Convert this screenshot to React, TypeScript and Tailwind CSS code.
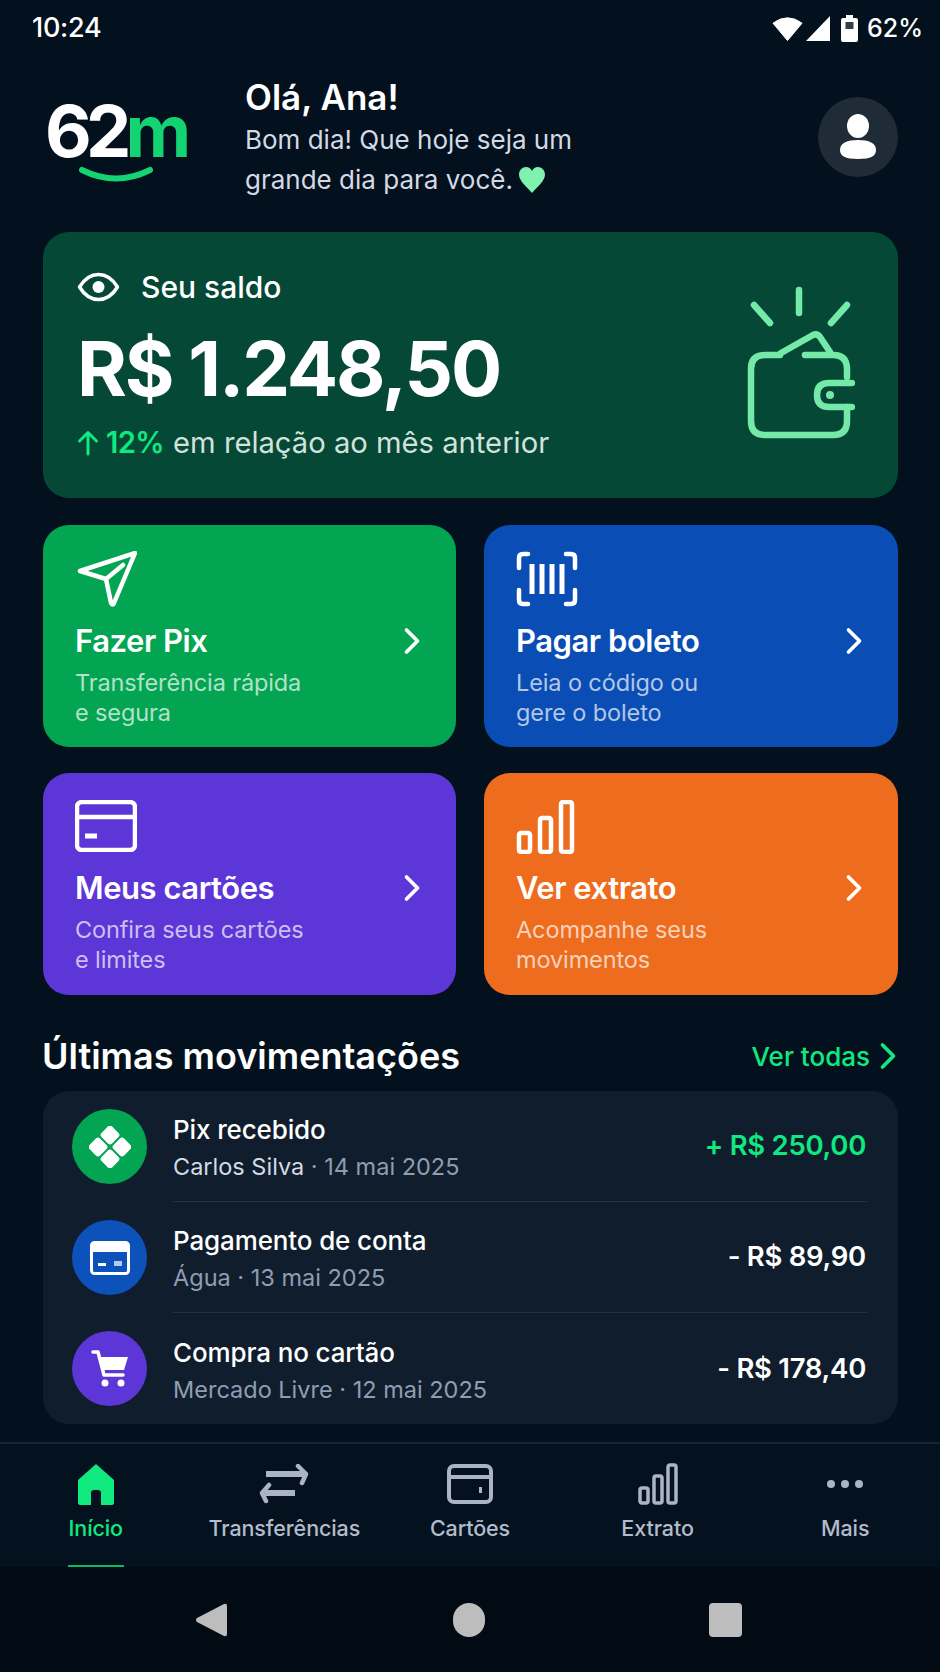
import { ChevronRight } from "lucide-react";
import type { ReactNode } from "react";

const font = { fontFamily: "Inter, sans-serif" };

function StatusBar() {
  return (
    <div className="flex h-[56px] items-center justify-between pl-[32px] pr-[17px] pt-[1px] text-[27px] font-medium tracking-[-0.01em] text-white">
      <span>10:24</span>
      <div className="flex items-center">
        <svg width="31" height="27" viewBox="0 0 32 27" fill="white">
          <path d="M1 8 Q16 -3 31 8 L16 26 Z" strokeLinejoin="round" stroke="white" strokeWidth="1" />
        </svg>
        <svg width="26" height="25" viewBox="0 0 26 25" fill="white" className="ml-[2px]">
          <path d="M25 0 V25 H1 Z" />
        </svg>
        <svg width="17" height="27" viewBox="0 0 17 27" className="ml-[10px]">
          <path d="M5 0 H12 V3 H15 Q17 3 17 5 V25 Q17 27 15 27 H2 Q0 27 0 25 V5 Q0 3 2 3 H5 Z" fill="white" />
          <rect x="4.5" y="7" width="8" height="7" fill="#33404d" />
        </svg>
        <span className="ml-[9px] text-[25px] tracking-normal">62%</span>
      </div>
    </div>
  );
}

function Logo() {
  return (
    <div className="relative mt-[28px] h-[110px] w-[155px] shrink-0">
      <div className="flex items-baseline pl-[2px] pt-[2px] text-[72px] leading-[90px] font-bold tracking-[-0.08em]">
        <span className="text-white">62</span>
        <span className="text-[#14d373]">m</span>
      </div>
      <svg className="absolute left-[35px] top-[81px]" width="76" height="26" viewBox="0 0 76 26" fill="none">
        <path d="M4 5 Q38 22 72 5" stroke="#14d373" strokeWidth="6" strokeLinecap="round" />
      </svg>
    </div>
  );
}

function Header() {
  return (
    <div className="flex h-[176px] items-start justify-between">
      <Logo />
      <div className="ml-[47px] flex-1 pt-[18px]">
        <div className="text-[35px] leading-[46px] font-semibold text-white">Olá, Ana!</div>
        <div className="text-[26px] leading-[40px] text-[#d3dae6]">
          Bom dia! Que hoje seja um
          <br />
          grande dia para você.{" "}
          <svg className="-ml-[2px] inline-block align-[-4px]" width="28" height="26" viewBox="0 0 28 26" fill="#7ef2ae">
            <path d="M14 26 C9 20 1 14 1 7.5 C1 3 4.5 0 8 0 C10.5 0 13 1.5 14 4 C15 1.5 17.5 0 20 0 C23.5 0 27 3 27 7.5 C27 14 19 20 14 26 Z" />
          </svg>
        </div>
      </div>
      <div className="mt-[41px] flex h-[80px] w-[80px] items-center justify-center rounded-full bg-[#202b38]">
        <svg width="40" height="46" viewBox="0 0 40 46" fill="white">
          <ellipse cx="20" cy="12" rx="11" ry="12" />
          <path d="M2 36 C2 29 9 26 20 26 C31 26 38 29 38 36 C38 42 33 45 20 45 C7 45 2 42 2 36 Z" />
        </svg>
      </div>
    </div>
  );
}

function BalanceCard() {
  return (
    <div className="flex h-[266px] items-start justify-between rounded-[26px] bg-[#054836] pl-[34px] pr-[43px] pt-[36px]">
      <div>
        <div className="flex items-center gap-[21px]">
          <svg width="43" height="30" viewBox="0 0 43 30" fill="none">
            <path d="M2.5 15 C8 6 14 2.5 21.5 2.5 C29 2.5 35 6 40.5 15 C35 24 29 27.5 21.5 27.5 C14 27.5 8 24 2.5 15 Z" stroke="white" strokeWidth="3.5" strokeLinejoin="round" />
            <circle cx="21.5" cy="15" r="6" fill="white" />
          </svg>
          <span className="text-[30px] leading-[38px] font-medium text-white">Seu saldo</span>
        </div>
        <div className="mt-[18px] text-[76px] leading-[88px] font-bold tracking-[-0.028em] text-white">R$ 1.248,50</div>
        <div className="mt-[13px] flex items-center text-[29.2px] leading-[36px] text-[#d3e2dc]">
          <svg width="22" height="26" viewBox="0 0 22 26" fill="none" className="mr-[7px]">
            <path d="M11 24 V3 M2.5 11 L11 2.5 L19.5 11" stroke="#10e880" strokeWidth="3" strokeLinecap="round" strokeLinejoin="round" />
          </svg>
          <span className="mr-[9px] font-semibold tracking-[-0.02em] text-[#10e880]">12%</span>
          <span>em relação ao mês anterior</span>
        </div>
      </div>
      <svg className="mt-[17px]" width="110" height="155" viewBox="0 0 110 155" fill="none" stroke="#75eaa8" strokeWidth="6.5" strokeLinecap="round" strokeLinejoin="round">
        <path d="M54 5 V28 M9 20 L25 38 M102 20 L86 38" />
        <path d="M35 70 H20 Q6 70 6 84 V136 Q6 150 20 150 H88 Q102 150 102 136 V122 M102 92 V84 Q102 70 88 70 H60" />
        <path d="M36 68 L68 50 Q72 48 75 52 L85 67" />
        <path d="M107 98 H84 Q72 98 72 110 Q72 122 84 122 H107" />
        <circle cx="85" cy="110" r="4" fill="#75eaa8" stroke="none" />
      </svg>
    </div>
  );
}

type ActionProps = {
  bg: string;
  icon: ReactNode;
  title: string;
  line1: string;
  line2: string;
  compact?: boolean;
};

function ActionCard({ bg, icon, title, line1, line2, compact }: ActionProps) {
  return (
    <div className={`h-[222px] rounded-[26px] pl-[32px] pr-[22px] pt-[26px] ${bg}`}>
      <div className="h-[56px]">{icon}</div>
      <div className={`flex h-[40px] items-center justify-between ${compact ? "mt-[12px]" : "mt-[14px]"}`}>
        <span className="text-[31px] leading-[40px] font-semibold tracking-[-0.015em] text-white">{title}</span>
        <ChevronRight size={44} strokeWidth={2} className="text-white" />
      </div>
      <div className="mt-[7px] text-[23.5px] leading-[30px] tracking-[-0.005em] text-white/70">
        {line1}
        <br />
        {line2}
      </div>
    </div>
  );
}

function ActionGrid() {
  return (
    <div className="mt-[27px] grid grid-cols-[413px_1fr] gap-x-[28px] gap-y-[26px]">
      <ActionCard
        bg="bg-[#03a553]"
        title="Fazer Pix"
        line1="Transferência rápida"
        line2="e segura"
        icon={
          <svg className="ml-[2px]" width="60" height="56" viewBox="0 0 60 56" fill="none" stroke="white" strokeWidth="4.5" strokeLinejoin="round" strokeLinecap="round">
            <path d="M3 20 L58 2 L37 52 Q36 55 34 52 L29 28 Z M29 28 L46 14" />
          </svg>
        }
      />
      <ActionCard
        bg="bg-[#0a4db5]"
        title="Pagar boleto"
        line1="Leia o código ou"
        line2="gere o boleto"
        icon={
          <svg width="62" height="56" viewBox="0 0 62 56" fill="none" stroke="white" strokeWidth="4.5" strokeLinecap="round" strokeLinejoin="round">
            <path d="M12 3 H7 Q3 3 3 7 V17 M50 3 H55 Q59 3 59 7 V17 M3 39 V49 Q3 53 7 53 H12 M59 39 V49 Q59 53 55 53 H50" />
            <path d="M16 13 V43 M26 13 V43 M36 13 V43 M46 13 V43" strokeLinecap="butt" strokeWidth="5" />
          </svg>
        }
      />
      <ActionCard
        compact
        bg="bg-[#5c36d6]"
        title="Meus cartões"
        line1="Confira seus cartões"
        line2="e limites"
        icon={
          <svg className="mt-[1px]" width="62" height="52" viewBox="0 0 62 52" fill="none" stroke="white" strokeWidth="4.5">
            <rect x="2" y="2" width="58" height="48" rx="5" />
            <path d="M2 17 H60" />
            <path d="M10 36 H22" strokeWidth="5" />
          </svg>
        }
      />
      <ActionCard
        compact
        bg="bg-[#ee6c1e]"
        title="Ver extrato"
        line1="Acompanhe seus"
        line2="movimentos"
        icon={
          <svg className="mt-[1px]" width="60" height="54" viewBox="0 0 60 54" fill="none" stroke="white" strokeWidth="4.5">
            <rect x="3" y="33" width="11" height="19" rx="2" />
            <rect x="24" y="18" width="11" height="34" rx="2" />
            <rect x="45" y="2" width="11" height="50" rx="2" />
          </svg>
        }
      />
    </div>
  );
}

type RowProps = {
  circle: string;
  icon: ReactNode;
  title: string;
  who: string;
  whoClass: string;
  date: string;
  amount: string;
  amountClass: string;
  last?: boolean;
};

function TxRow({ circle, icon, title, who, whoClass, date, amount, amountClass, last }: RowProps) {
  return (
    <div className="flex h-[111px] items-center">
      <div className={`flex h-[75px] w-[75px] shrink-0 items-center justify-center rounded-full ${circle}`}>{icon}</div>
      <div className={`ml-[26px] flex h-full flex-1 items-center justify-between ${last ? "" : "border-b border-[#263241]"}`}>
        <div className="pt-[4px]">
          <div className="text-[26px] leading-[37px] font-medium tracking-[-0.005em] text-white">{title}</div>
          <div className="text-[23.5px] leading-[37px] text-[#8f9db3]">
            <span className={whoClass}>{who}</span> · {date}
          </div>
        </div>
        <span className={`pr-[1px] text-[27.5px] font-semibold tracking-[-0.01em] ${amountClass}`}>{amount}</span>
      </div>
    </div>
  );
}

function Movements() {
  return (
    <>
      <div className="mt-[37px] flex items-center justify-between">
        <h2 className="-ml-[1px] text-[36px] leading-[48px] font-semibold text-white">Últimas movimentações</h2>
        <div className="flex items-center text-[26px] font-medium text-[#10e880]">
          Ver todas
          <ChevronRight size={44} strokeWidth={2} className="-my-[6px] -ml-[4px] -mr-[12px]" />
        </div>
      </div>
      <div className="mt-[11px] h-[333px] rounded-[26px] bg-[#101d2c] pl-[29px] pr-[31px]">
        <TxRow
          circle="bg-[#03a553]"
          title="Pix recebido"
          who="Carlos Silva"
          whoClass="text-[#d3dae6]"
          date="14 mai 2025"
          amount="+ R$ 250,00"
          amountClass="text-[#10e880]"
          icon={
            <svg width="42" height="42" viewBox="0 0 42 42" fill="white">
              <rect x="13.5" y="1.5" width="15" height="15" rx="3" transform="rotate(45 21 9)" />
              <rect x="13.5" y="25.5" width="15" height="15" rx="3" transform="rotate(45 21 33)" />
              <rect x="1.5" y="13.5" width="15" height="15" rx="3" transform="rotate(45 9 21)" />
              <rect x="25.5" y="13.5" width="15" height="15" rx="3" transform="rotate(45 33 21)" />
            </svg>
          }
        />
        <TxRow
          circle="bg-[#0d51bb]"
          title="Pagamento de conta"
          who="Água"
          whoClass=""
          date="13 mai 2025"
          amount="- R$ 89,90"
          amountClass="text-white"
          icon={
            <svg width="40" height="34" viewBox="0 0 40 34" fill="none">
              <rect x="1.5" y="1.5" width="37" height="31" rx="3" stroke="white" strokeWidth="3" />
              <rect x="2" y="2" width="36" height="9" fill="white" />
              <rect x="8" y="22" width="8" height="3" fill="white" />
              <rect x="24" y="20" width="8" height="5" fill="white" opacity="0.7" />
            </svg>
          }
        />
        <TxRow
          last
          circle="bg-[#5c36d6]"
          title="Compra no cartão"
          who="Mercado Livre"
          whoClass=""
          date="12 mai 2025"
          amount="- R$ 178,40"
          amountClass="text-white"
          icon={
            <svg width="40" height="40" viewBox="0 0 40 40" fill="white">
              <path d="M3 3 H8 L14 26 H33" fill="none" stroke="white" strokeWidth="3.5" strokeLinecap="round" strokeLinejoin="round" />
              <path d="M9 8 H38 L34 21 H12 Z" />
              <circle cx="15" cy="34" r="3.5" />
              <circle cx="31" cy="34" r="3.5" />
            </svg>
          }
        />
      </div>
    </>
  );
}

type NavProps = { icon: ReactNode; label: string; active?: boolean; nudge?: string };

function NavItem({ icon, label, active, nudge = "" }: NavProps) {
  return (
    <div className={`relative flex flex-1 flex-col items-center pt-[18px] ${nudge}`}>
      <div className="flex h-[44px] items-center justify-center">{icon}</div>
      <span className={`mt-[8px] text-[21.5px] leading-[28px] font-medium tracking-[-0.005em] ${active ? "text-[#10e880]" : "text-[#b3bccb]"}`}>{label}</span>
      {active && <div className="absolute bottom-0 h-[2px] w-[56px] bg-[#10b765]" />}
    </div>
  );
}

function BottomNav() {
  const gray = "#aab4c4";
  return (
    <div className="mt-[18px] flex h-[125px] border-t-2 border-[#182431] bg-[#04121f] px-[1px]">
      <NavItem
        active
        nudge="translate-x-[1px]"
        label="Início"
        icon={
          <svg width="38" height="43" viewBox="0 0 38 43" fill="#10e880">
            <path d="M19 1 L37 17 V40 Q37 42 35 42 H24 V30 Q24 27 21 27 H17 Q14 27 14 30 V42 H3 Q1 42 1 40 V17 Z" strokeLinejoin="round" />
          </svg>
        }
      />
      <NavItem
        nudge="translate-x-[2px]"
        label="Transferências"
        icon={
          <svg width="50" height="40" viewBox="0 0 50 40" fill="none" stroke={gray} strokeWidth="4.5" strokeLinecap="round" strokeLinejoin="round">
            <path d="M7 10 H46" strokeWidth="6" strokeLinecap="butt" />
            <path d="M39 2 L47 10 L43 19" />
            <path d="M36 29 H6" strokeWidth="6" strokeLinecap="butt" />
            <path d="M10 21 L3 29 L7 37" />
          </svg>
        }
      />
      <NavItem
        label="Cartões"
        icon={
          <svg width="46" height="40" viewBox="0 0 46 40" fill="none" stroke={gray} strokeWidth="4">
            <rect x="2" y="2" width="42" height="36" rx="5" />
            <path d="M2 13 H44" />
            <rect x="32" y="23" width="3" height="6" fill={gray} stroke="none" />
          </svg>
        }
      />
      <NavItem
        label="Extrato"
        icon={
          <svg width="40" height="42" viewBox="0 0 40 42" fill="none" stroke={gray} strokeWidth="3.5">
            <rect x="2" y="25" width="8" height="15" rx="2" />
            <rect x="16" y="13" width="8" height="27" rx="2" />
            <rect x="30" y="2" width="8" height="38" rx="2" />
          </svg>
        }
      />
      <NavItem
        label="Mais"
        icon={
          <svg width="38" height="10" viewBox="0 0 38 10" fill={gray}>
            <circle cx="5" cy="5" r="4" />
            <circle cx="19" cy="5" r="4" />
            <circle cx="33" cy="5" r="4" />
          </svg>
        }
      />
    </div>
  );
}

function SystemBar() {
  return (
    <div className="flex h-[105px] items-start justify-center gap-[224px] bg-[#020a14] pr-[4px] pt-[36px]">
      <svg className="mr-[2px]" width="32" height="34" viewBox="0 0 32 34" fill="#bdbdbd">
        <path d="M29 1 Q32 0 32 3 V31 Q32 34 29 33 L2 19 Q0 17 2 15 Z" />
      </svg>
      <div className="h-[34px] w-[32px] rounded-full bg-[#bdbdbd]" />
      <div className="h-[34px] w-[33px] rounded-[4px] bg-[#bdbdbd]" />
    </div>
  );
}

export default function App() {
  return (
    <div style={font} className="flex h-[1672px] w-[940px] flex-col overflow-hidden bg-[#03101d]">
      <StatusBar />
      <div className="pl-[43px] pr-[42px]">
        <Header />
        <BalanceCard />
        <ActionGrid />
        <Movements />
      </div>
      <BottomNav />
      <SystemBar />
    </div>
  );
}
